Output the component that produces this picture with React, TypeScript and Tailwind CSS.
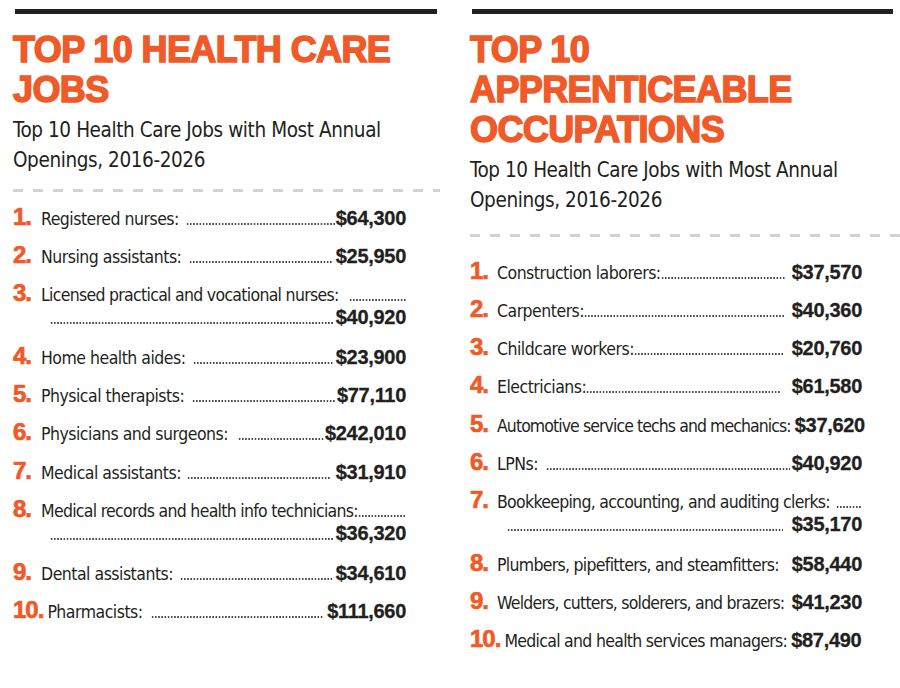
import React from "react";

type Item = {
  n: string;
  label: string;
  price: string;
  wrap?: boolean;
  gl?: number; // gap after label
  gr?: number; // gap before price
  noLeader?: boolean;
  ls?: number; // letter spacing override
};

const leftItems: Item[] = [
  { n: "1.", label: "Registered nurses:", price: "$64,300", gl: 7, gr: 1 },
  { n: "2.", label: "Nursing assistants:", price: "$25,950", gl: 8, gr: 3 },
  { n: "3.", label: "Licensed practical and vocational nurses:", price: "$40,920", wrap: true, gl: 10, gr: 2, ls: -0.7 },
  { n: "4.", label: "Home health aides:", price: "$23,900", gl: 7, gr: 2 },
  { n: "5.", label: "Physical therapists:", price: "$77,110", gl: 8, gr: 2 },
  { n: "6.", label: "Physicians and surgeons:", price: "$242,010", gl: 10, gr: 0 },
  { n: "7.", label: "Medical assistants:", price: "$31,910", gl: 6, gr: 5 },
  { n: "8.", label: "Medical records and health info technicians:", price: "$36,320", wrap: true, gl: 0, gr: 2, ls: -0.7 },
  { n: "9.", label: "Dental assistants:", price: "$34,610", gl: 7, gr: 3 },
  { n: "10.", label: "Pharmacists:", price: "$111,660", gl: 8, gr: 3 },
];

const rightItems: Item[] = [
  { n: "1.", label: "Construction laborers:", price: "$37,570", gl: 0, gr: 6 },
  { n: "2.", label: "Carpenters:", price: "$40,360", gl: 0, gr: 7 },
  { n: "3.", label: "Childcare workers:", price: "$20,760", gl: 0, gr: 8 },
  { n: "4.", label: "Electricians:", price: "$61,580", gl: 0, gr: 12 },
  { n: "5.", label: "Automotive service techs and mechanics:", price: "$37,620", noLeader: true, ls: -0.92 },
  { n: "6.", label: "LPNs:", price: "$40,920", gl: 8, gr: 2 },
  { n: "7.", label: "Bookkeeping, accounting, and auditing clerks:", price: "$35,170", wrap: true, gl: 6, gr: 9, ls: -0.7 },
  { n: "8.", label: "Plumbers, pipefitters, and steamfitters:", price: "$58,440", noLeader: true, ls: -0.7 },
  { n: "9.", label: "Welders, cutters, solderers, and brazers:", price: "$41,230", noLeader: true, ls: -0.78 },
  { n: "10.", label: "Medical and health services managers:", price: "$87,490", noLeader: true, ls: -0.7, gr: 5 },
];

const narrow = "[font-family:'Liberation_Sans_Narrow','DejaVu_Sans_Condensed',sans-serif]";

function Leader({ ml = 0, mr = 0 }: { ml?: number; mr?: number }) {
  return (
    <div
      className="h-[2px] flex-1 mb-[1px] bg-[radial-gradient(circle,#4a4a4a_0.8px,transparent_1.2px)] bg-[length:3.2px_2px] bg-repeat-x"
      style={{ marginLeft: ml, marginRight: mr }}
    />
  );
}

function Num({ n, w }: { n: string; w: number }) {
  return (
    <span
      className="shrink-0 text-[24px] leading-[18px] font-bold text-[#f05a28] tracking-[-1px] [font-family:'Liberation_Sans',Arial,sans-serif] [-webkit-text-stroke:0.7px_#f05a28] pr-[4px]"
      style={{ minWidth: w }}
    >
      {n}
    </span>
  );
}

function Price({ p }: { p: string }) {
  return (
    <span className="shrink-0 text-[20px] leading-[20px] font-bold text-[#231f20] tracking-[-0.3px] [font-family:'Liberation_Sans',Arial,sans-serif] [-webkit-text-stroke:0.3px_#231f20]">
      {p}
    </span>
  );
}

function Row({ item, numW, indent }: { item: Item; numW: number; indent: number }) {
  const label = (
    <span
      className={`text-[17.5px] leading-[24px] tracking-[-0.5px] text-[#231f20] whitespace-nowrap ${narrow}`}
      style={item.ls !== undefined ? { letterSpacing: item.ls } : undefined}
    >
      {item.label}
    </span>
  );
  if (item.wrap) {
    return (
      <div className="flex flex-col">
        <div className="flex items-baseline h-[24px]">
          <Num n={item.n} w={numW} />
          {label}
          <Leader ml={item.gl} />
        </div>
        <div className="flex items-baseline h-[24px]" style={{ paddingLeft: numW + indent }}>
          <Leader mr={item.gr} />
          <Price p={item.price} />
        </div>
      </div>
    );
  }
  return (
    <div className="flex items-baseline h-[24px]" style={item.noLeader && item.gr ? { paddingRight: item.gr } : undefined}>
      <Num n={item.n} w={numW} />
      {label}
      {item.noLeader ? <div className="flex-1 min-w-[4px]" /> : <Leader ml={item.gl} mr={item.gr} />}
      <Price p={item.price} />
    </div>
  );
}

function Heading({ lines }: { lines: string[] }) {
  return (
    <h2 className="text-[36px] leading-[40px] font-bold text-[#f05a28] tracking-[-0.6px] [font-family:'Liberation_Sans',Arial,sans-serif] [-webkit-text-stroke:1.5px_#f05a28]">
      {lines.map((l) => (
        <div key={l} className="whitespace-nowrap">{l}</div>
      ))}
    </h2>
  );
}

function Subtitle({ lines }: { lines: string[] }) {
  return (
    <div className={`text-[20.5px] leading-[30px] tracking-[-0.4px] text-[#231f20] ${narrow}`}>
      {lines.map((l) => (
        <div key={l} className="whitespace-nowrap">{l}</div>
      ))}
    </div>
  );
}

function Dashes() {
  return (
    <div className="h-[3px] bg-[repeating-linear-gradient(90deg,#d2d2d2_0px,#d2d2d2_10px,transparent_10px,transparent_20px)]" />
  );
}

export default function App() {
  return (
    <div className="w-[900px] h-[688px] bg-white overflow-hidden flex pt-[9px]">
      {/* Left column */}
      <div className="ml-[13px] w-[424px] shrink-0 flex flex-col">
        <div className="ml-[2px] h-[5px] bg-[#231f20]" />
        <div className="mt-[15.5px]">
          <Heading lines={["TOP 10 HEALTH CARE", "JOBS"]} />
        </div>
        <div className="mt-[5px]">
          <Subtitle lines={["Top 10 Health Care Jobs with Most Annual", "Openings, 2016-2026"]} />
        </div>
        <div className="mt-[14px] w-[427px]">
          <Dashes />
        </div>
        <div className="mt-[15px] w-[393px] flex flex-col gap-[14.4px]">
          {leftItems.map((it) => (
            <Row key={it.n} item={it} numW={28} indent={9} />
          ))}
        </div>
      </div>
      {/* Right column */}
      <div className="ml-[33px] w-[430px] shrink-0 flex flex-col">
        <div className="ml-[2px] w-[421px] h-[5px] bg-[#231f20]" />
        <div className="mt-[15.5px]">
          <Heading lines={["TOP 10", "APPRENTICEABLE", "OCCUPATIONS"]} />
        </div>
        <div className="mt-[5px]">
          <Subtitle lines={["Top 10 Health Care Jobs with Most Annual", "Openings, 2016-2026"]} />
        </div>
        <div className="mt-[19px]">
          <Dashes />
        </div>
        <div className="mt-[24px] w-[392px] flex flex-col gap-[14.3px]">
          {rightItems.map((it) => (
            <Row key={it.n} item={it} numW={27} indent={10} />
          ))}
        </div>
      </div>
    </div>
  );
}
